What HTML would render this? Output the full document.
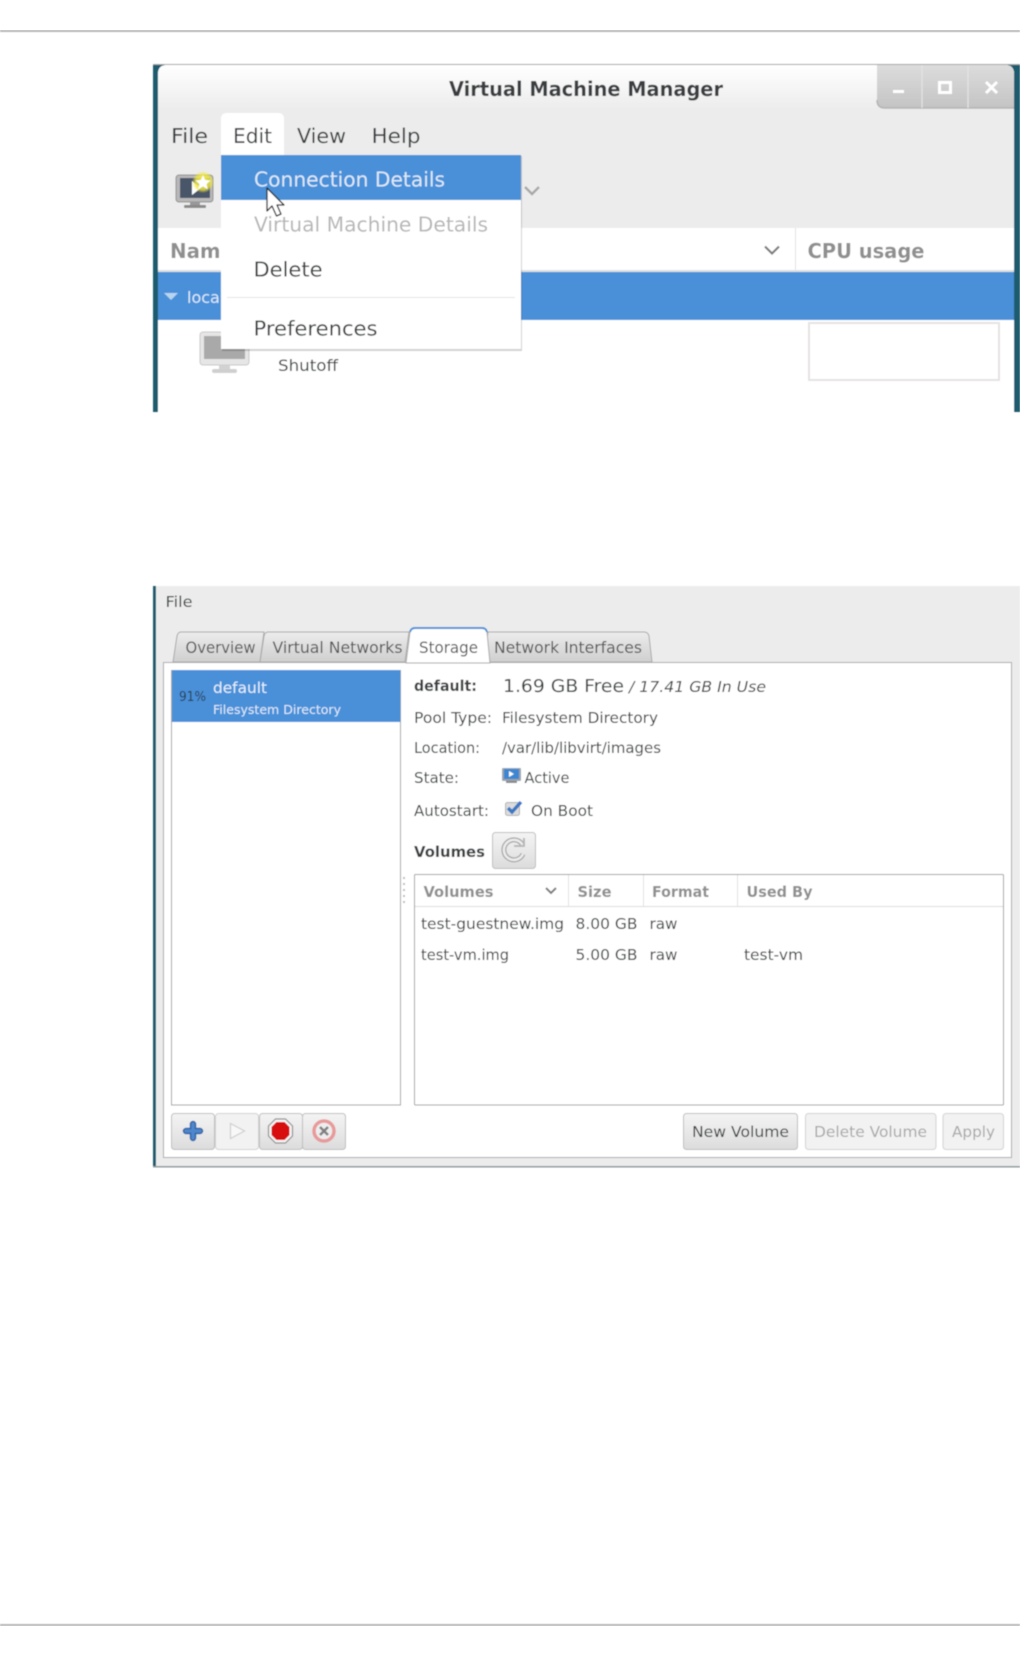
<!DOCTYPE html>
<html><head><meta charset="utf-8"><style>
html,body{margin:0;padding:0;background:#fff;width:1020px;height:1656px;overflow:hidden}
svg{display:block}
text{font-family:"DejaVu Sans","Liberation Sans",sans-serif;fill:#3a3e40}
.b{font-weight:bold}
.h{font-weight:bold;fill:#8f8f8f}
</style></head><body>
<svg width="1020" height="1656" viewBox="0 0 1020 1656" xmlns="http://www.w3.org/2000/svg">
<defs>
<filter id="bl" x="0" y="0" width="100%" height="100%"><feGaussianBlur stdDeviation="0.55"/></filter>
<linearGradient id="tb" x1="0" y1="0" x2="0" y2="1"><stop offset="0" stop-color="#ffffff"/><stop offset="1" stop-color="#ececec"/></linearGradient>
<linearGradient id="wb" x1="0" y1="0" x2="0" y2="1"><stop offset="0" stop-color="#dcdcdc"/><stop offset="1" stop-color="#c4c4c4"/></linearGradient>
<linearGradient id="tab" x1="0" y1="0" x2="0" y2="1"><stop offset="0" stop-color="#ececec"/><stop offset="1" stop-color="#cfcfcf"/></linearGradient>
<linearGradient id="btn" x1="0" y1="0" x2="0" y2="1"><stop offset="0" stop-color="#f4f4f4"/><stop offset="1" stop-color="#dcdcdc"/></linearGradient>
<radialGradient id="glow"><stop offset="0" stop-color="#f6f040"/><stop offset=".7" stop-color="#f0e840" stop-opacity=".8"/><stop offset="1" stop-color="#f0e840" stop-opacity="0"/></radialGradient>
</defs>
<rect width="1020" height="1656" fill="#fff"/>
<g filter="url(#bl)">
<rect x="0" y="30" width="1020" height="2" fill="#b8b8b8"/>
<rect x="0" y="1624" width="1020" height="2" fill="#b8b8b8"/>

<!-- window 1 -->
<rect x="153" y="64" width="867" height="348" fill="#1f5b6e"/>
<path d="M158 412V74q0-9 9-9H1005q9 0 9 9V412Z" fill="#fff"/>
<rect x="153" y="64" width="867" height="1" fill="#a8a8a8"/>
<path d="M158 74q0-9 9-9H1005q9 0 9 9V110H158Z" fill="url(#tb)"/>
<rect x="158" y="108" width="856" height="120" fill="#ececec"/>
<path d="M877 65H1005q9 0 9 9V108H885q-8 0-8-8Z" fill="url(#wb)"/>
<path d="M877 100q0 8 8 8H1014" fill="none" stroke="#b4b4b4" stroke-width="1.5"/>
<path d="M922 65V108M968 65V108" stroke="#e4e4e4" stroke-width="1.2"/>
<rect x="893" y="90" width="11" height="3" fill="#fff"/>
<rect x="939.500" y="82.500" width="11" height="10" fill="none" stroke="#fff" stroke-width="3"/>
<path d="M986 82L997 93M997 82L986 93" stroke="#fff" stroke-width="3"/>
<text class="b" x="449" y="96" font-size="20" textLength="274" lengthAdjust="spacingAndGlyphs">Virtual Machine Manager</text>

<text x="171" y="143" font-size="20" textLength="37" lengthAdjust="spacingAndGlyphs">File</text>
<path d="M221 155V119q0-6 6-6H278q6 0 6 6V155Z" fill="#fff"/>
<text x="233" y="143" font-size="20" textLength="39" lengthAdjust="spacingAndGlyphs">Edit</text>
<text x="297" y="143" font-size="20" textLength="49" lengthAdjust="spacingAndGlyphs">View</text>
<text x="371.500" y="143" font-size="20" textLength="49" lengthAdjust="spacingAndGlyphs">Help</text>

<!-- new vm icon -->
<rect x="176" y="175" width="37" height="27" rx="3" fill="#b8b8b8" stroke="#909090"/>
<rect x="180" y="178" width="30" height="20" fill="#4a5568"/>
<path d="M192 181l9 7-9 7Z" fill="#fff"/>
<rect x="190" y="202" width="10" height="3" fill="#999"/>
<rect x="184" y="205" width="22" height="3" rx="1" fill="#8a8a8a"/>
<circle cx="203" cy="182" r="11" fill="url(#glow)"/>
<path d="M203 175l2.200 5 5.300.5-4 3.500 1.200 5.200-4.700-2.800-4.700 2.800 1.200-5.200-4-3.500 5.300-.5Z" fill="#fff"/>
<path d="M525 187l7 7 7-7" fill="none" stroke="#a8a8a8" stroke-width="2.400"/>

<!-- headers -->
<rect x="158" y="228" width="856" height="43" fill="#fff"/>
<rect x="158" y="270" width="856" height="2" fill="#dfdfdf"/>
<rect x="795" y="228" width="1" height="42" fill="#e2e2e2"/>
<text class="h" x="170" y="258" font-size="20" textLength="64" lengthAdjust="spacingAndGlyphs">Name</text>
<path d="M765 246.500l7 7 7-7" fill="none" stroke="#7a7a7a" stroke-width="2.200"/>
<text class="h" x="807.500" y="258" font-size="20" textLength="117" lengthAdjust="spacingAndGlyphs">CPU usage</text>
<rect x="158" y="272" width="856" height="48" fill="#4a90d9"/>
<path d="M164 293H178L171 300Z" fill="#b8d4f0"/>
<text x="187" y="303" font-size="16" style="fill:#dbe8f7">localhost</text>

<!-- row -->
<rect x="200" y="332" width="49" height="33" rx="3" fill="#e6e6e6" stroke="#c8c8c8"/>
<rect x="204" y="336" width="41" height="23" fill="#a9a9a9"/>
<rect x="219" y="365" width="11" height="4" fill="#d2d2d2"/>
<rect x="212" y="369" width="25" height="4" rx="2" fill="#cfcfcf"/>
<text x="278" y="371" font-size="16" textLength="60" lengthAdjust="spacingAndGlyphs">Shutoff</text>
<rect x="809" y="323" width="190" height="57" fill="#fff" stroke="#e6e2e2" stroke-width="2"/>

<!-- menu -->
<rect x="222" y="156" width="300" height="195" fill="#000" opacity=".18"/>
<rect x="221" y="155" width="300" height="194" fill="#fff"/>
<rect x="221" y="155" width="300" height="45" fill="#4a90d9"/>
<text x="254" y="186.500" font-size="20" style="fill:#dfe9f6" textLength="191" lengthAdjust="spacingAndGlyphs">Connection Details</text>
<text x="254" y="231.500" font-size="20" style="fill:#b6b6b6" textLength="234" lengthAdjust="spacingAndGlyphs">Virtual Machine Details</text>
<text x="253.500" y="276.500" font-size="20" textLength="69" lengthAdjust="spacingAndGlyphs">Delete</text>
<rect x="227" y="297" width="288" height="1" fill="#e4e4e4"/>
<text x="253.500" y="335.500" font-size="20" textLength="124" lengthAdjust="spacingAndGlyphs">Preferences</text>
<path d="M267 188V211L272 206L276.500 216L281 214L277 205H284Z" fill="#fff" stroke="#222" stroke-width="1.300" stroke-linejoin="round"/>

<!-- window 2 -->
<rect x="153" y="586" width="867" height="581" fill="#ececec"/>
<rect x="153" y="586" width="3" height="581" fill="#1f5b6e"/>
<rect x="153" y="1166" width="867" height="1.500" fill="#8f9a9c"/>
<text x="165.500" y="607" font-size="15" textLength="27" lengthAdjust="spacingAndGlyphs">File</text>

<path d="M173 662L177 636q1-4 4-4H264L260 662Z" fill="url(#tab)" stroke="#a8a8a8"/>
<path d="M260 662L264 636q1-4 4-4H409L405 662Z" fill="url(#tab)" stroke="#a8a8a8"/>
<path d="M484 662L488 632H644q4 0 5 4L652 662Z" fill="url(#tab)" stroke="#a8a8a8"/>
<rect x="163.500" y="662.500" width="848" height="495" fill="#fff" stroke="#a8a8a8"/>
<path d="M406 663L410 632q1-4 5-4H482q4 0 5 4L490 663Z" fill="#fff" stroke="#a8a8a8"/>
<path d="M410 632q1-4 5-4H482q4 0 5 4" fill="none" stroke="#4a90d9" stroke-width="2"/>
<text x="185.500" y="653" font-size="16" style="fill:#555" textLength="70" lengthAdjust="spacingAndGlyphs">Overview</text>
<text x="272.500" y="653" font-size="16" style="fill:#555" textLength="130" lengthAdjust="spacingAndGlyphs">Virtual Networks</text>
<text x="419" y="653" font-size="16" style="fill:#555" textLength="59" lengthAdjust="spacingAndGlyphs">Storage</text>
<text x="494" y="653" font-size="16" style="fill:#555" textLength="148" lengthAdjust="spacingAndGlyphs">Network Interfaces</text>

<!-- pool list -->
<rect x="171.500" y="670.500" width="229" height="434.500" fill="#fff" stroke="#a0a0a0"/>
<rect x="172" y="670" width="228.500" height="52" fill="#4a90d9"/>
<text x="179" y="701" font-size="13" style="fill:#2c3a48" textLength="27" lengthAdjust="spacingAndGlyphs">91%</text>
<text x="213" y="693" font-size="15.500" style="fill:#e8f0fa" textLength="54" lengthAdjust="spacingAndGlyphs">default</text>
<text x="213" y="714" font-size="12.500" style="fill:#e0eaf7" textLength="128" lengthAdjust="spacingAndGlyphs">Filesystem Directory</text>
<path d="M404 877v2M404 883v2M404 889v2M404 895v2M404 901v2" stroke="#bbb" stroke-width="2"/>

<!-- details -->
<text class="b" x="414" y="691" font-size="15.500" textLength="63" lengthAdjust="spacingAndGlyphs">default:</text>
<text x="503" y="692" font-size="18" textLength="121" lengthAdjust="spacingAndGlyphs">1.69 GB Free</text>
<text x="629" y="692" font-size="15.500" font-style="italic" textLength="137" lengthAdjust="spacingAndGlyphs">/ 17.41 GB In Use</text>
<text x="414" y="723" font-size="15.500" textLength="78" lengthAdjust="spacingAndGlyphs">Pool Type:</text>
<text x="502" y="723" font-size="15.500" textLength="156" lengthAdjust="spacingAndGlyphs">Filesystem Directory</text>
<text x="414" y="753" font-size="15.500" textLength="66" lengthAdjust="spacingAndGlyphs">Location:</text>
<text x="502" y="753" font-size="15.500" textLength="159" lengthAdjust="spacingAndGlyphs">/var/lib/libvirt/images</text>
<text x="414" y="783" font-size="15.500" textLength="45" lengthAdjust="spacingAndGlyphs">State:</text>
<rect x="502" y="768" width="19" height="13" rx="1" fill="#9aa3ab"/>
<rect x="504" y="769" width="15" height="10" fill="#3d86d2"/>
<path d="M509 771l5 3-5 3Z" fill="#fff"/>
<rect x="506" y="781" width="11" height="2" fill="#888"/>
<text x="524.500" y="783" font-size="15.500" textLength="45" lengthAdjust="spacingAndGlyphs">Active</text>
<text x="414" y="816" font-size="15.500" textLength="75" lengthAdjust="spacingAndGlyphs">Autostart:</text>
<rect x="505.500" y="802.500" width="14" height="13" rx="2" fill="#dcdcdc" stroke="#b0b0b0"/>
<path d="M508 808l4 4L521 802" fill="none" stroke="#3d78c4" stroke-width="3.500"/>
<text x="531" y="816" font-size="15.500" textLength="62" lengthAdjust="spacingAndGlyphs">On Boot</text>
<text class="b" x="414" y="857" font-size="15.500" textLength="71" lengthAdjust="spacingAndGlyphs">Volumes</text>
<rect x="492.500" y="832.500" width="43" height="36" rx="3" fill="url(#btn)" stroke="#bdbdbd"/>
<path d="M522 844A10 10 0 1 0 523 854" fill="none" stroke="#a6a6a6" stroke-width="5"/>
<path d="M522 844A10 10 0 1 0 523 854" fill="none" stroke="#ececec" stroke-width="2.500"/>
<path d="M514 846h10v-8" fill="none" stroke="#b4b4b4" stroke-width="1.800"/>

<!-- volumes table -->
<rect x="414.500" y="874.500" width="589" height="230.500" rx="1" fill="#fff" stroke="#a0a0a0"/>
<rect x="415" y="906" width="588" height="1" fill="#dcdcdc"/>
<path d="M568.500 875V906M643.500 875V906M737.500 875V906" stroke="#e2e2e2"/>
<text class="h" x="423.500" y="897" font-size="15.500" textLength="70" lengthAdjust="spacingAndGlyphs">Volumes</text>
<path d="M546 888l5 5 5-5" fill="none" stroke="#7a7a7a" stroke-width="2"/>
<text class="h" x="577.500" y="897" font-size="15.500" textLength="34" lengthAdjust="spacingAndGlyphs">Size</text>
<text class="h" x="652" y="897" font-size="15.500" textLength="57" lengthAdjust="spacingAndGlyphs">Format</text>
<text class="h" x="746.500" y="897" font-size="15.500" textLength="66" lengthAdjust="spacingAndGlyphs">Used By</text>
<text x="421" y="929" font-size="15.500" textLength="143" lengthAdjust="spacingAndGlyphs">test-guestnew.img</text>
<text x="575.500" y="929" font-size="15.500" textLength="62" lengthAdjust="spacingAndGlyphs">8.00 GB</text>
<text x="649.500" y="929" font-size="15.500" textLength="28" lengthAdjust="spacingAndGlyphs">raw</text>
<text x="421" y="960" font-size="15.500" textLength="88" lengthAdjust="spacingAndGlyphs">test-vm.img</text>
<text x="575.500" y="960" font-size="15.500" textLength="62" lengthAdjust="spacingAndGlyphs">5.00 GB</text>
<text x="649.500" y="960" font-size="15.500" textLength="28" lengthAdjust="spacingAndGlyphs">raw</text>
<text x="744" y="960" font-size="15.500" textLength="59" lengthAdjust="spacingAndGlyphs">test-vm</text>

<!-- bottom buttons -->
<rect x="171.500" y="1113.500" width="43" height="36" rx="3" fill="url(#btn)" stroke="#bdbdbd"/>
<rect x="215.500" y="1113.500" width="43" height="36" rx="3" fill="#f2f2f2" stroke="#d2d2d2"/>
<rect x="259.500" y="1113.500" width="43" height="36" rx="3" fill="url(#btn)" stroke="#bdbdbd"/>
<rect x="302.500" y="1113.500" width="43" height="36" rx="3" fill="url(#btn)" stroke="#bdbdbd"/>
<path d="M193 1124v14M186 1131h14" stroke="#2f62a8" stroke-width="6.500" stroke-linecap="round"/>
<path d="M193 1124v14M186 1131h14" stroke="#4f86cc" stroke-width="3.500" stroke-linecap="round"/>
<path d="M230.500 1123.500v15l14-7.500Z" fill="#f8f8f8" stroke="#cfcfcf" stroke-width="1.200"/>
<path d="M275.500 1119H285.500L292.500 1126V1136L285.500 1143H275.500L268.500 1136V1126Z" fill="#f4f4f4" stroke="#8e8e8e" stroke-width="1.200"/>
<path d="M276.500 1122H284.500L289.500 1127V1135L284.500 1140H276.500L271.500 1135V1127Z" fill="#d80808"/>
<circle cx="324" cy="1131" r="10" fill="#ededed" stroke="#e89a9a" stroke-width="3.500"/>
<path d="M320 1127l8 8M328 1127l-8 8" stroke="#808080" stroke-width="2.600"/>

<rect x="683.500" y="1113.500" width="114" height="36" rx="3" fill="url(#btn)" stroke="#bdbdbd"/>
<text x="692" y="1137" font-size="15.500" textLength="97" lengthAdjust="spacingAndGlyphs">New Volume</text>
<rect x="805.500" y="1113.500" width="130.500" height="36" rx="3" fill="#f2f2f2" stroke="#d2d2d2"/>
<text x="814" y="1137" font-size="15.500" style="fill:#a8a8a8" textLength="113" lengthAdjust="spacingAndGlyphs">Delete Volume</text>
<rect x="943" y="1113.500" width="60.500" height="36" rx="3" fill="#f2f2f2" stroke="#d2d2d2"/>
<text x="952" y="1137" font-size="15.500" style="fill:#a8a8a8" textLength="43" lengthAdjust="spacingAndGlyphs">Apply</text>
</g>
</svg>
</body></html>
